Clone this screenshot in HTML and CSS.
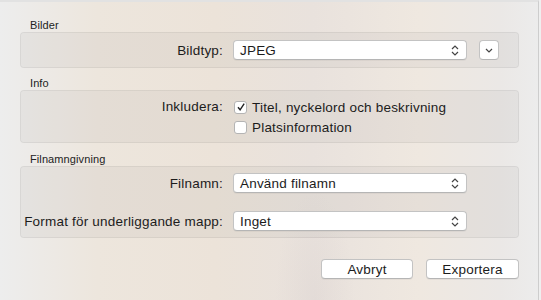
FILE: index.html
```html
<!DOCTYPE html>
<html lang="sv">
<head>
    <meta charset="UTF-8">
    <title>Exportera</title>
    <link rel="stylesheet" href="styles.css">
</head>
<body>
    <div class="window">
        <div class="panel">
            <section class="group">
                <h2 class="group-title">Bilder</h2>
                <div class="box">
                    <div class="row">
                        <span class="label">Bildtyp:</span>
                        <div class="popup">
                            <span>JPEG</span>
                            <svg class="updown" width="8" height="11" viewBox="0 0 8 11"><path d="M1 4 L4 1 L7 4 M1 7 L4 10 L7 7" fill="none" stroke="#444" stroke-width="1.2"/></svg>
                        </div>
                        <div class="mini-btn">
                            <svg width="8" height="5" viewBox="0 0 8 5"><path d="M1 1 L4 4 L7 1" fill="none" stroke="#444" stroke-width="1.2"/></svg>
                        </div>
                    </div>
                </div>
            </section>

            <section class="group">
                <h2 class="group-title">Info</h2>
                <div class="box box-info">
                    <div class="row row-top">
                        <span class="label">Inkludera:</span>
                        <div class="checks">
                            <label class="check">
                                <span class="checkbox">
                                    <svg width="10" height="10" viewBox="0 0 10 10"><path d="M2 5.2 L4.1 7.8 L8.2 1.6" fill="none" stroke="#222" stroke-width="1.4"/></svg>
                                </span>
                                Titel, nyckelord och beskrivning
                            </label>
                            <label class="check">
                                <span class="checkbox"></span>
                                Platsinformation
                            </label>
                        </div>
                    </div>
                </div>
            </section>

            <section class="group">
                <h2 class="group-title">Filnamngivning</h2>
                <div class="box box-names">
                    <div class="row">
                        <span class="label">Filnamn:</span>
                        <div class="popup">
                            <span>Använd filnamn</span>
                            <svg class="updown" width="8" height="11" viewBox="0 0 8 11"><path d="M1 4 L4 1 L7 4 M1 7 L4 10 L7 7" fill="none" stroke="#444" stroke-width="1.2"/></svg>
                        </div>
                    </div>
                    <div class="row">
                        <span class="label">Format för underliggande mapp:</span>
                        <div class="popup">
                            <span>Inget</span>
                            <svg class="updown" width="8" height="11" viewBox="0 0 8 11"><path d="M1 4 L4 1 L7 4 M1 7 L4 10 L7 7" fill="none" stroke="#444" stroke-width="1.2"/></svg>
                        </div>
                    </div>
                </div>
            </section>

            <div class="actions">
                <button class="btn btn-cancel">Avbryt</button>
                <button class="btn btn-export">Exportera</button>
            </div>
        </div>
    </div>
</body>
</html>
```

FILE: styles.css
```css
:root {
    --text: #1c1c1c;
    --box-bg: rgba(0, 0, 0, 0.035);
    --box-border: rgba(0, 0, 0, 0.055);
    --control-border: #c3c3c3;
}

* {
    margin: 0;
    padding: 0;
    box-sizing: border-box;
}

body {
    width: 541px;
    height: 300px;
    overflow: hidden;
    font-family: 'Liberation Sans', Arial, sans-serif;
    font-size: 13.5px;
    letter-spacing: 0.2px;
    color: var(--text);
    background: #efefef;
}

.window {
    display: flex;
    height: 300px;
}

.panel {
    width: 539px;
    height: 300px;
    padding: 17px 19px 0 20px;
    border-top: 2px solid #e2e2e2;
    border-right: 1px solid #cdcdcd;
    background:
        radial-gradient(ellipse 40px 110px at 315px 300px, rgba(205, 195, 195, 0.22), transparent),
        linear-gradient(90deg, #ededed 0%, #ede6dd 18%, #ece3d9 40%, #e9e2dd 58%, #efe8e0 78%, #ebe8e6 93%, #ececec 100%);
}

.group-title {
    font-size: 11px;
    font-weight: normal;
    letter-spacing: 0.1px;
    line-height: 13px;
    padding-left: 10px;
    color: #222;
}

.group + .group {
    margin-top: 9px;
}

.group:last-of-type {
    margin-top: 10px;
}

.box {
    background: var(--box-bg);
    border: 1px solid var(--box-border);
    border-radius: 4px;
    padding: 7px 0;
    display: flex;
    flex-direction: column;
    gap: 18px;
}

.box-info {
    padding: 6px 0 5px;
}

.box-names {
    padding: 6px 0;
}

.row {
    display: grid;
    grid-template-columns: 202px auto auto;
    column-gap: 10px;
    align-items: center;
    justify-content: start;
}

.row-top {
    align-items: start;
}

.row-top .label {
    line-height: 20px;
}

.label {
    text-align: right;
    white-space: nowrap;
}

.popup {
    width: 234px;
    height: 20px;
    background: #fff;
    border: 1px solid var(--control-border);
    border-bottom-color: #b5b5b5;
    border-radius: 4px;
    box-shadow: 0 1px 0 rgba(0, 0, 0, 0.04);
    display: flex;
    align-items: center;
    justify-content: space-between;
    padding: 0 7px 0 6px;
}

.mini-btn {
    width: 20px;
    height: 20px;
    margin-left: 2px;
    background: #fff;
    border: 1px solid var(--control-border);
    border-bottom-color: #b5b5b5;
    border-radius: 4px;
    display: flex;
    align-items: center;
    justify-content: center;
}

.checks {
    display: flex;
    flex-direction: column;
}

.check {
    display: flex;
    align-items: center;
    gap: 5px;
    height: 20px;
    margin-left: 1px;
}

.checkbox {
    width: 13px;
    height: 13px;
    background: #fff;
    border: 1px solid #b4b4b4;
    border-radius: 3px;
    display: flex;
    align-items: center;
    justify-content: center;
}

.actions {
    margin-top: 21px;
    display: flex;
    justify-content: flex-end;
    gap: 13px;
}

.btn {
    height: 20px;
    font-family: inherit;
    font-size: 13.5px;
    letter-spacing: 0.2px;
    color: var(--text);
    background: #fff;
    border: 1px solid var(--control-border);
    border-bottom-color: #b5b5b5;
    border-radius: 4px;
    box-shadow: 0 1px 0 rgba(0, 0, 0, 0.04);
}

.btn-cancel {
    width: 92px;
}

.btn-export {
    width: 93px;
}
```
